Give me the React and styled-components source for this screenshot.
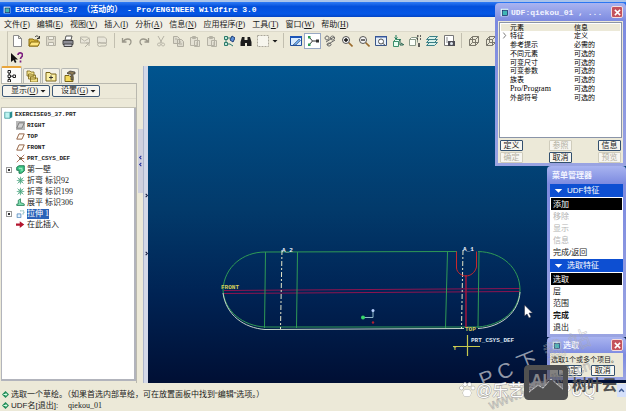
import { useState } from "react";
import styled, { createGlobalStyle, css } from "styled-components";

const GlobalStyle = createGlobalStyle`
  * {
    box-sizing: border-box;
  }
  body {
    margin: 0;
    overflow: hidden;
    background: #ece9d8;
    color: #1a1a1a;
    font: 8px/11px "Liberation Sans", "Noto Sans CJK SC", sans-serif;
  }
  button,
  input {
    margin: 0;
    padding: 0;
    border: 0;
    background: none;
    color: inherit;
    font: inherit;
    white-space: nowrap;
  }
  svg {
    display: block;
    flex: none;
  }
`;

/* ---------- icons ---------- */

const glyphs = {
  app: (
    <>
      <rect x="1" y="1" width="10" height="10" fill="#e8ffff" />
      <rect x="3" y="3" width="7" height="7" fill="#3fb5b5" stroke="#126" />
    </>
  ),
  new: (
    <path d="M2.500.5h5l3 3v8h-8zM7.500.5v3h3" fill="#fff" stroke="#8b8b8b" />
  ),
  open: (
    <>
      <path d="M1 4h4l1 1h4v6H1z" fill="#d9b63a" stroke="#8a6d10" />
      <path d="M3 7h9l-2 4H1z" fill="#ffe680" stroke="#8a6d10" />
      <path d="M7 2c2-2 3-1 4 1M11.500 1v2.500H9" fill="none" stroke="#333" />
    </>
  ),
  save: (
    <>
      <path d="M1.500 1.500h9v9h-9z" fill="#dedacb" stroke="#b5b2a5" />
      <path d="M3.500 1.500h5v3h-5zM3.500 7.500h5v3h-5z" fill="#f2f0e6" stroke="#b5b2a5" />
    </>
  ),
  print: (
    <>
      <path d="M4 1h6L9 5H3z" fill="#fff" stroke="#555" />
      <path d="M1 5.500h10v4H1z" fill="#8c8c94" stroke="#444" />
      <path d="M2 9h8v2.500H2z" fill="#c8c8d0" stroke="#444" />
    </>
  ),
  mail: (
    <>
      <path d="M1.500 2h7l2 2v4h-9zM1.500 3l4 3 5-3" fill="#e8e5d9" stroke="#bab7aa" />
      <path d="M7 8h3v3M10 8l-4 4" fill="none" stroke="#b5b2a5" />
    </>
  ),
  link: (
    <>
      <path d="M1.500 2h7l2 2v4h-9z" fill="#e8e5d9" stroke="#bab7aa" />
      <path d="M5 8a2 2 0 1 0 0 3h4a1.500 1.500 0 1 0 0-3z" fill="none" stroke="#b5b2a5" />
    </>
  ),
  undo: (
    <path d="M1.500 3v4h4M2 7c2-4 8-4 8 0 0 2-1 2.500-2 3" fill="none" stroke="#9a978a" strokeWidth="1.300" />
  ),
  redo: (
    <path d="M10.500 3v4h-4M10 7c-2-4-8-4-8 0 0 2 1 2.500 2 3" fill="none" stroke="#9a978a" strokeWidth="1.300" />
  ),
  cut: (
    <path
      d="M3 1l4 7M9 1L5 8M4 8a1.500 1.500 0 1 0 .1 0M8 8a1.500 1.500 0 1 0 .1 0"
      fill="none"
      stroke="#b5b2a5"
    />
  ),
  copy: (
    <path
      d="M1.500 1.500h4l2 2v5h-6zM5.500 4.500h4l2 2v5h-6zM7 7h2M7 9h3M3 4h2"
      fill="#dedbce"
      stroke="#b0ada0"
    />
  ),
  paste: (
    <path
      d="M1.500 2.500h7v8h-7zM3.500 1.500h3v2h-3zM5.500 5.500h5v6h-5zM7 8h2M7 10h2"
      fill="#e4e1d4"
      stroke="#b5b2a5"
    />
  ),
  regen: (
    <>
      <path d="M1.500 1.500h3v3h-3zM1.500 7.500h3v3h-3zM5 3h3M3 5v2M5 9h2" fill="#bfe6d8" stroke="#2c7a6a" />
      <path d="M7 5l2-4 3 2-2 4z" fill="#5e91d8" stroke="#1d3d78" />
      <path d="M7 9l3 2" stroke="#2c7a6a" />
    </>
  ),
  find: (
    <path d="M2 2h2.500v3h3V2H10l1.500 5v4H7V8H5v3H.5V7z" fill="#1d1d1d" />
  ),
  select: (
    <path d="M.5 .5h11v11H.5z" fill="#f7f6ee" stroke="#aaa79a" strokeDasharray="2 1" />
  ),
  repaint: (
    <>
      <path d="M.5 1.500h11v9H.5z" fill="#d9ecff" stroke="#1d4fa0" />
      <path d="M0 1h12v2H0z" fill="#1c55b8" />
      <path d="M3 10l6-6 1.500 1.500L6 10z" fill="#6ea7e8" stroke="#38527a" strokeWidth=".6" />
    </>
  ),
  spin: (
    <>
      <path d="M2 2l3.500 4H10M5.500 6L2 10" fill="none" stroke="#333" />
      <path d="M1 1h2.500v2.500H1z" fill="#2e9e55" />
      <path d="M9 4.500h3v3H9z" fill="#333" />
      <path d="M1 8.500h2.500V11H1z" fill="#2e9e55" />
    </>
  ),
  orient: (
    <path
      d="M3 1a2 2 0 1 0 .1 0M8.500 1a2 2 0 1 0 .1 0M2 7l8-5M3 10l8-5M5 8a2 1.500 0 1 0 .1 0"
      fill="none"
      stroke="#666"
    />
  ),
  zoomIn: (
    <>
      <path d="M7.500 7.500l4 4" stroke="#9a6b2c" strokeWidth="1.600" />
      <circle cx="5" cy="5" r="3.500" fill="#f5f5f5" stroke="#555" />
      <path d="M3 5h4M5 3v4" stroke="#111" strokeWidth="1.400" />
    </>
  ),
  zoomOut: (
    <>
      <path d="M7.500 7.500l4 4" stroke="#9a6b2c" strokeWidth="1.600" />
      <circle cx="5" cy="5" r="3.500" fill="#f5f5f5" stroke="#555" />
      <path d="M3 5h4" stroke="#111" strokeWidth="1.200" />
    </>
  ),
  refit: (
    <>
      <path d="M.5 1.500h11v9H.5z" fill="#e6f0fb" stroke="#3a5688" />
      <path d="M0 1h12v1.500H0z" fill="#35569a" />
      <circle cx="6" cy="6.500" r="2.500" fill="#fff" stroke="#555" />
      <path d="M8 8.500l2.500 2" stroke="#555" />
    </>
  ),
  reorient: (
    <>
      <path d="M1.500 6.500h5v5h-5zM1.500 6.500l2-2h5l-2 2" fill="#e6fff2" stroke="#3d8f6c" />
      <path d="M8 4v6h3M9 8l3 2" fill="none" stroke="#1a5c48" />
      <path d="M4 0v4M2.500 2.500L4 4l1.500-1.500" fill="none" stroke="#1a7a5a" />
    </>
  ),
  views: (
    <>
      <path d="M.5 4.500h6v6h-6zM.5 4.500l2-2h6l-2 2M8.500 2.500v5" fill="#fbfff8" stroke="#8a9a8a" />
      <path d="M8 1h1.500M11 1h1M8 4h1M11 4h1M9 9h2M9 11h2" stroke="#333" strokeWidth="1.400" />
    </>
  ),
  layers: (
    <path
      d="M3.500 1.500h8l-3 3h-8zM3.500 4.500h8l-3 3h-8zM3.500 7.500h8l-3 3h-8z"
      fill="#d8f1ea"
      stroke="#3b7f86"
    />
  ),
  viewMgr: (
    <>
      <path d="M1.500.5h9v10h-9z" fill="#fff" stroke="#777" />
      <path d="M3 3h2M3 5h2M3 7h2" stroke="#888" />
      <path d="M5 6h7v5H5z" fill="#4c4c54" />
      <circle cx="8.500" cy="8.500" r="1.500" fill="#dfe6ee" />
    </>
  ),
  wire: (
    <path
      d="M1.500 4.500h6v6h-6zM4.500 1.500h6v6h-6zM1.500 4.500l3-3M7.500 4.500l3-3M7.500 10.500l3-3M1.500 10.500l3-3"
      fill="none"
      stroke="#7a776c"
    />
  ),
  help: (
    <>
      <path d="M0 1v9l2.500-2L4 11l1.500-1L4 7.500h3z" fill="#111" />
      <path d="M7 3c0-3 4.500-2.500 4.500 0C11.500 5 9.500 5 9.500 7M9.500 8.500v2" fill="none" stroke="#7d2080" strokeWidth="1.700" />
    </>
  ),
  tabTree: (
    <path
      d="M2 .5h2.500V3H2zM2 5h2.500v2.500H2zM2 9.500h2.500V12H2zM7 5h2.500v2.500H7zM3.200 3v2M3.200 7.500v2M4.500 6.200H7"
      fill="#fff"
      stroke="#222"
    />
  ),
  tabFolders: (
    <path
      d="M1 1h3l1 1h3v4H1zM2.500 4h3l1 1h3v4h-7zM4.500 7h3l1 1h3v4h-7z"
      fill="#f4e38c"
      stroke="#7a6518"
      strokeWidth=".8"
    />
  ),
  tabFav: (
    <>
      <path d="M1 2.500h4l1 1.500h5v7H1z" fill="#fbf0a8" stroke="#7a6518" />
      <path d="M4 7.500h4M6 5.500v4" stroke="#333" />
    </>
  ),
  tabLink: (
    <>
      <path d="M1 5.500h4l1 1h3v5H1z" fill="#f4d95c" stroke="#7a6518" />
      <path d="M3 3l3-2 5 1v2H9v6H7V4H4z" fill="#8c7a55" stroke="#333" strokeWidth=".7" />
    </>
  ),
  part: (
    <>
      <path d="M1 3h7v8H1z" fill="#bdf3f0" stroke="#2f8f92" />
      <path d="M8 3l3-1.500v8L8 11z" fill="#2a8c90" />
      <path d="M1 3l3-1.500h7L8 3z" fill="#e6ffff" />
    </>
  ),
  plane: (
    <path d="M4 2.500h7l-3 7H1z" fill="#fffaf2" stroke="#8c5a3c" strokeWidth="1.200" />
  ),
  planeSel: (
    <>
      <path d="M0 0h12v12H0z" fill="#b9b9b9" />
      <path d="M4 2.500h7l-3 7H1z" fill="#cfcfcf" stroke="#777" strokeWidth="1.200" />
    </>
  ),
  csys: (
    <>
      <path d="M1 1l10 10M11 1L1 11M6 6h5" stroke="#b0705a" strokeWidth="1.300" />
      <path d="M4.500 4.500h3v3h-3z" fill="#553" />
    </>
  ),
  wall: (
    <>
      <path d="M1 3l3-2h7v7l-4 3H4V7H1z" fill="#44c98a" stroke="#0f6d43" strokeWidth="1.200" />
      <path d="M4 4.500h4V8" fill="none" stroke="#c9f5de" />
    </>
  ),
  bend: (
    <path
      d="M2 2l8 8M10 2l-8 8M1 6h10M6 1v10M3 4h6M3 8h6"
      fill="none"
      stroke="#3f9f78"
      strokeWidth=".9"
    />
  ),
  unbend: (
    <path d="M3 8V3l3-2v5l5 2v2H1V8z" fill="#7fdcae" stroke="#1c7a50" />
  ),
  extrude: (
    <>
      <path d="M1.500 6.500h5v5h-5z" fill="#e2f2ff" stroke="#4a82b8" />
      <path d="M5.500 2.500h5v4h-3" fill="none" stroke="#4a9a9a" strokeDasharray="2 1" />
    </>
  ),
  insert: (
    <path d="M0 4.500h5V1.500L11 6l-6 4.500v-3H0z" fill="#b3152e" />
  ),
  prompt: (
    <>
      <path d="M6 0l6 6-6 6-6-6z" fill="#1f8a57" />
      <path d="M2.500 5H6V3l3.500 3L6 9V7H2.500z" fill="#d5ffe6" />
    </>
  ),
  cross: (
    <path d="M2.500 2.500l7 7M9.500 2.500l-7 7" stroke="#fff" strokeWidth="2" />
  ),
  down: <path d="M1 4h10L6 9z" fill="currentColor" />,
  left: <path d="M8 2L4 6l4 4" fill="none" stroke="#1c2a9c" strokeWidth="2.500" />,
  right: <path d="M4 2l4 4-4 4" fill="none" stroke="#10183c" strokeWidth="2.500" />,
  next: <path d="M4 1l4 5-4 5" fill="none" stroke="#444" strokeWidth="1.200" />,
  up: <path d="M2 8l4-4 4 4" fill="none" stroke="#3d5a94" strokeWidth="2.500" />,
};

function Icon({ name, size = 12 }) {
  return (
    <svg width={size} height={size} viewBox="0 0 12 12" aria-hidden="true">
      {glyphs[name]}
    </svg>
  );
}

/* ---------- main window ---------- */

const Window = styled.div`
  display: flex;
  flex-direction: column;
  height: 100vh;
  border-top: 2px solid #a9c3ea;
`;

const TitleBar = styled.header`
  display: flex;
  align-items: center;
  gap: 4px;
  height: 15px;
  padding: 0 3px;
  background: linear-gradient(#2f7bf5, #0450dc 30%, #0557e6 80%, #0444c4);
  color: #fff;
  font-family: "Liberation Mono", "Noto Sans CJK SC", monospace;
  font-weight: bold;
  white-space: pre;
`;

const MenuBar = styled.nav`
  display: flex;
  align-items: center;
  gap: 7px;
  height: 14px;
  padding: 0 4px;
  background: #f1efe6;
  font-family: "Liberation Serif", "Noto Sans CJK SC", serif;
`;

const ToolArea = styled.div`
  display: flex;
  flex-direction: column;
  height: 35px;
  margin-left: 7px;
  border-left: 1px solid #c9c6b6;
  border-top: 1px solid #dcd9ca;
`;

const ToolRow = styled.div`
  display: flex;
  align-items: center;
  height: 17px;
`;

const ToolButton = styled.button`
  display: flex;
  align-items: center;
  justify-content: center;
  width: 17px;
  height: 16px;
  ${({ $pressed }) =>
    $pressed &&
    css`
      border: 1px solid #98a8c4;
      background: #fff;
    `}
`;

const Separator = styled.span`
  width: 8px;
  height: 15px;
  background: linear-gradient(#c2bfb0, #c2bfb0) center / 1px 100% no-repeat;
`;

const Caret = styled.span`
  display: flex;
  align-items: center;
  justify-content: center;
  width: 8px;
`;

const Main = styled.main`
  display: grid;
  grid-template-columns: 137px 6px 5px 1fr;
  flex: 1;
  min-height: 0;
`;

const Sidebar = styled.aside`
  display: flex;
  flex-direction: column;
  min-height: 0;
  padding-left: 1px;
`;

const Tabs = styled.div`
  display: flex;
  align-items: flex-end;
  gap: 1px;
  height: 17px;
`;

const Tab = styled.button`
  display: flex;
  align-items: center;
  justify-content: center;
  width: 18px;
  height: 15px;
  border: 1px solid #b6b8b4;
  border-bottom: 0;
  border-radius: 2px 2px 0 0;
  background: #f3f1e7;
  ${({ $active }) =>
    $active &&
    css`
      width: 21px;
      height: 17px;
      border-top: 2px solid #e9a63c;
      background: #fcfcf9;
    `}
`;

const Panel = styled.section`
  display: flex;
  flex-direction: column;
  flex: 1;
  min-height: 0;
  border: 1px solid #b9b8ae;
  border-width: 1px 1px 0 0;
`;

const PanelButtons = styled.div`
  display: flex;
  gap: 2px;
  padding: 1px;
`;

const PanelButton = styled.button`
  display: flex;
  align-items: center;
  justify-content: center;
  gap: 1px;
  width: 48px;
  height: 12px;
  padding-left: 6px;
  border: 1px solid #3f5a78;
  border-radius: 2px;
  background: #f6f5ef;
  font-family: "Liberation Serif", "Noto Sans CJK SC", serif;
  line-height: 10px;
`;

const PanelHead = styled.div`
  height: 10px;
  border-bottom: 1px solid #c4c2b4;
  border-top: 1px solid #dddaca;
`;

const TreeList = styled.ul`
  flex: 1;
  margin: 0 0 2px;
  padding: 1px 0 0 2px;
  border: 1px solid #b2b4bc;
  border-width: 0 2px 2px 1px;
  background: #fff;
  list-style: none;
`;

const TreeRow = styled.li`
  display: flex;
  align-items: center;
  gap: 2px;
  height: 11px;
  padding-left: ${({ $child }) => ($child ? 2 : 0)}px;
  white-space: pre;
`;

const Expander = styled.span`
  width: 6px;
  height: 6px;
  margin-right: 2px;
  ${({ $open }) =>
    $open &&
    css`
      border: 1px solid #9a9a9a;
      background: linear-gradient(#333, #333) center / 2px 2px no-repeat;
    `}
`;

const TreeText = styled.span`
  font-family: "Liberation Serif", "Noto Sans CJK SC", serif;
  ${({ $latin }) =>
    $latin &&
    css`
      font-family: "Liberation Mono", monospace;
      font-size: 6px;
      font-weight: bold;
    `}
  ${({ $selected }) =>
    $selected &&
    css`
      background: #2b62b8;
      color: #fff;
      line-height: 10px;
    `}
`;

const Gutter = styled.div`
  padding: 63px 0 0 1px;
  background: #ece9d8;
`;

const Sash = styled.div`
  display: flex;
  flex-direction: column;
  align-items: center;
  gap: 53px;
  padding-top: 127px;
  border-left: 1px solid #aeb6cc;
  background: #d3d8e8;
`;

const SashGrip = styled.button`
  display: flex;
  flex-direction: column;
  align-items: center;
  justify-content: center;
  gap: 2px;
  width: 5px;
  height: 64px;
  background: #cfd0de;
`;

const Canvas = styled.div`
  min-width: 0;
  min-height: 0;
  background: linear-gradient(#00548f, #023a6b 45%, #002354 72%, #000f34);
  svg {
    width: 100%;
    height: 100%;
  }
`;

const StatusBar = styled.footer`
  display: flex;
  flex-direction: column;
  justify-content: flex-end;
  height: 28px;
  padding-left: 2px;
`;

const StatusLine = styled.label`
  display: flex;
  align-items: center;
  gap: 2px;
  height: 11px;
`;

const StatusInput = styled.input`
  width: 80px;
  margin-left: 8px;
  font-family: "Liberation Serif", serif;
`;

const ScrollUp = styled.button`
  position: absolute;
  right: 0;
  bottom: 14px;
  display: flex;
  align-items: center;
  justify-content: center;
  width: 9px;
  height: 13px;
  background: #d5e0fa;
`;

/* ---------- floating windows ---------- */

const Floating = styled.div`
  position: absolute;
  top: 3px;
  right: 0;
  display: flex;
  flex-direction: column;
  align-items: flex-end;
`;

const Dialog = styled.section`
  width: ${({ $wide }) => ($wide ? 131 : 79)}px;
  padding: 0 3px 3px;
  border-radius: 4px 4px 0 0;
  background: linear-gradient(#a9b4f0, #7c8ae0 18px, #9aa4e2);
`;

const DialogTitle = styled.header`
  display: flex;
  align-items: center;
  gap: 2px;
  height: ${({ $tall }) => ($tall ? 18 : 16)}px;
  padding-left: 2px;
  color: #f2f4ff;
  font-family: ${({ $mono }) =>
    $mono
      ? '"Liberation Mono", "Noto Sans CJK SC", monospace'
      : '"Liberation Sans", "Noto Sans CJK SC", sans-serif'};
  font-weight: bold;
  white-space: pre;
`;

const CloseButton = styled.button`
  display: flex;
  align-items: center;
  justify-content: center;
  width: 12px;
  height: 12px;
  margin-left: auto;
  border: 1px solid #f5dede;
  border-radius: 2px;
  background: #c4525c;
`;

const DialogBody = styled.div`
  padding-top: 1px;
  background: #ece9d8;
`;

const ListBox = styled.div`
  height: 116px;
  margin: 0 1px;
  padding: 1px;
  border: 1px solid #8a94a8;
  background: #fff;
`;

const ElementTable = styled.table`
  width: 100%;
  height: 78px;
  border-collapse: collapse;
  table-layout: fixed;
  color: #000;
  font: 7px/7px "Liberation Sans", "Noto Sans CJK SC", sans-serif;
  th {
    background: #ece9d8;
    font-weight: normal;
    text-align: left;
  }
  th,
  td {
    padding: 0;
    white-space: nowrap;
  }
`;

const Latin = styled.span`
  font: 8px/7px "Liberation Serif", serif;
`;

const ButtonGrid = styled.div`
  display: grid;
  grid-template-columns: repeat(3, 23px);
  justify-content: space-between;
  gap: 1px;
  padding: 2px 2px 0;
`;

const PushButton = styled.button`
  height: 11px;
  border: 1px solid #33506e;
  border-radius: 1px;
  background: #f7f6f0;
  line-height: 9px;
  &:disabled {
    border-color: #cfccbc;
    color: #b3b0a2;
  }
`;

const MenuGroup = styled.h2`
  display: flex;
  align-items: center;
  gap: 4px;
  height: 13px;
  margin: 0;
  padding-left: 4px;
  background: #0d4fd2;
  color: #fff;
  font-size: 8px;
  font-weight: normal;
`;

const MenuItems = styled.div`
  display: flex;
  flex-direction: column;
  padding: 1px;
  background: #fff;
`;

const MenuItem = styled.button`
  height: 12px;
  padding-left: 2px;
  text-align: left;
  font-weight: ${({ $bold }) => ($bold ? "bold" : "normal")};
  ${({ $active }) =>
    $active &&
    css`
      background: #000;
      color: #fff;
    `}
  &:disabled {
    color: #b4b4b4;
  }
`;

const Message = styled.p`
  margin: 0;
  padding: 0 1px;
  font-size: 7px;
  white-space: nowrap;
`;

const ChoiceRow = styled.div`
  display: flex;
  justify-content: space-evenly;
  padding-bottom: 1px;
  button {
    width: 24px;
  }
`;

const Watermark = styled.svg`
  position: absolute;
  right: 0;
  bottom: 0;
  pointer-events: none;
`;

/* ---------- data ---------- */

const menus = [
  ["文件", "F"],
  ["编辑", "E"],
  ["视图", "V"],
  ["插入", "I"],
  ["分析", "A"],
  ["信息", "N"],
  ["应用程序", "P"],
  ["工具", "T"],
  ["窗口", "W"],
  ["帮助", "H"],
];

const tools = [
  "new", "open", "save", "print", "mail", "link", "|",
  "undo", "redo", "cut", "copy", "paste", "paste", "regen", "find", "select", "v", "|",
  "repaint", "spin", "orient", "zoomIn", "zoomOut", "refit", "reorient", "views", "layers", "viewMgr", "|",
  "wire", "wire",
];

const tree = [
  { icon: "planeSel", text: "RIGHT", latin: true },
  { icon: "plane", text: "TOP", latin: true },
  { icon: "plane", text: "FRONT", latin: true },
  { icon: "csys", text: "PRT_CSYS_DEF", latin: true },
  { icon: "wall", text: "第一壁", open: true },
  { icon: "bend", text: "折弯 标识92" },
  { icon: "bend", text: "折弯 标识199" },
  { icon: "unbend", text: "展平 标识306" },
  { icon: "extrude", text: "拉伸 1", open: true, selected: true },
  { icon: "insert", text: "在此插入" },
];

const elements = [
  ["特征", "定义"],
  ["参考提示", "必需的"],
  ["不同元素", "可选的"],
  ["可变尺寸", "可选的"],
  ["可变参数", "可选的"],
  ["族表", "可选的"],
  ["Pro/Program", "可选的"],
  ["外部符号", "可选的"],
];

/* ---------- parts ---------- */

function Toolbar() {
  return (
    <ToolArea>
      <ToolRow>
        {tools.map((name, i) => {
          if (name === "|") return <Separator key={i} />;
          if (name === "v")
            return (
              <Caret key={i}>
                <Icon name="down" size={6} />
              </Caret>
            );
          return (
            <ToolButton key={i} aria-label={name} $pressed={name === "spin"}>
              <Icon name={name} />
            </ToolButton>
          );
        })}
      </ToolRow>
      <ToolRow>
        <ToolButton aria-label="help">
          <Icon name="help" />
        </ToolButton>
      </ToolRow>
    </ToolArea>
  );
}

function ModelTree() {
  return (
    <Sidebar>
      <Tabs>
        <Tab $active aria-label="tree">
          <Icon name="tabTree" />
        </Tab>
        <Tab aria-label="folders">
          <Icon name="tabFolders" />
        </Tab>
        <Tab aria-label="favorites">
          <Icon name="tabFav" />
        </Tab>
        <Tab aria-label="connections">
          <Icon name="tabLink" />
        </Tab>
      </Tabs>
      <Panel>
        <PanelButtons>
          <PanelButton>
            <span>
              显示(<u>O</u>)
            </span>
            <Caret>
              <Icon name="down" size={6} />
            </Caret>
          </PanelButton>
          <PanelButton>
            <span>
              设置(<u>G</u>)
            </span>
            <Caret>
              <Icon name="down" size={6} />
            </Caret>
          </PanelButton>
        </PanelButtons>
        <PanelHead />
        <TreeList>
          <TreeRow>
            <Icon name="part" size={9} />
            <TreeText $latin>EXERCISE05_37.PRT</TreeText>
          </TreeRow>
          {tree.map((row) => (
            <TreeRow key={row.text} $child>
              <Expander $open={row.open} />
              <Icon name={row.icon} size={9} />
              <TreeText $latin={row.latin} $selected={row.selected}>
                {row.text}
              </TreeText>
            </TreeRow>
          ))}
        </TreeList>
      </Panel>
    </Sidebar>
  );
}

function Model() {
  return (
    <Canvas>
      <svg viewBox="148 66 478 317" fill="none">
        <path d="M224 290.500L520 288.500M224 293.500L520 291.500" stroke="#8c1450" />
        <g stroke="#2f9a56">
          <path d="M223 290C224 267 243 252 265 252L457 251.500M478 251.500C502 252 520 268 520 290" />
          <path d="M265.500 252L264.500 328M297.500 252L296.500 328M447.500 252L445.500 328M479 252L478 328" />
          <path d="M223 290C224 311 243 326 265 327L478 327C502 325 519 311 520 290" />
        </g>
        <path
          d="M223 293C226 315 244 328 265 329.500L464 328.500M478 328.500C503 327 519 311 520 292"
          stroke="#c3d3c8"
        />
        <path d="M282 250L280.500 329M463 250L461.500 329" stroke="#e6e6c8" strokeDasharray="5 2 2 2" />
        <path d="M466 275V328" stroke="#a3163c" strokeWidth="1.500" />
        <path d="M456.500 251.500V268C457 273 462 276 466 276S475 273 476.500 267V251.500" stroke="#c8282c" />
        <path d="M453 346.500H480M467.500 335V356" stroke="#c6c84e" strokeWidth="1.200" />
        <path d="M363 317.500H373V310" stroke="#8fb8c8" />
        <circle cx="363" cy="317.500" r="2" fill="#35d86a" />
        <circle cx="373" cy="310.500" r="1.500" fill="#b8d0ff" />
        <circle cx="373" cy="322.500" r="1.200" fill="#b02030" />
        <g fontFamily="Liberation Mono, monospace" fontSize="6" fontWeight="bold">
          <text x="221" y="289" fill="#d6cf5a">FRONT</text>
          <text x="465" y="331" fill="#d6cf5a">TOP</text>
          <text x="282" y="252" fill="#eef3ff">A_2</text>
          <text x="463" y="251" fill="#eef3ff">A_1</text>
          <text x="471" y="342" fill="#dfe6f2">PRT_CSYS_DEF</text>
          <text x="453" y="350" fill="#d6cf5a">Y</text>
        </g>
        <path d="M524.500 305v11l2.500-2 2 4 2-1-2-4h3.500z" fill="#fff" stroke="#223" strokeWidth=".5" />
      </svg>
    </Canvas>
  );
}

function UdfDialog() {
  return (
    <Dialog $wide>
      <DialogTitle $tall $mono>
        <Icon name="app" size={9} />
        UDF:qiekou_01 , ...
        <CloseButton aria-label="close">
          <Icon name="cross" size={9} />
        </CloseButton>
      </DialogTitle>
      <DialogBody>
        <ListBox>
          <ElementTable>
            <colgroup>
              <col width="9" />
              <col width="64" />
              <col />
            </colgroup>
            <thead>
              <tr>
                <th />
                <th>元素</th>
                <th>信息</th>
              </tr>
            </thead>
            <tbody>
              {elements.map(([name, info], i) => (
                <tr key={name}>
                  <td>{i === 0 && <Icon name="next" size={7} />}</td>
                  <td>{name.startsWith("Pro") ? <Latin>{name}</Latin> : name}</td>
                  <td>{info}</td>
                </tr>
              ))}
            </tbody>
          </ElementTable>
        </ListBox>
        <ButtonGrid>
          <PushButton>定义</PushButton>
          <PushButton disabled>参照</PushButton>
          <PushButton>信息</PushButton>
          <PushButton disabled>确定</PushButton>
          <PushButton>取消</PushButton>
          <PushButton disabled>预览</PushButton>
        </ButtonGrid>
      </DialogBody>
    </Dialog>
  );
}

function MenuManager() {
  return (
    <Dialog>
      <DialogTitle $tall>菜单管理器</DialogTitle>
      <MenuGroup>
        <Icon name="down" size={9} />
        UDF特征
      </MenuGroup>
      <MenuItems>
        <MenuItem $active>添加</MenuItem>
        <MenuItem disabled>移除</MenuItem>
        <MenuItem disabled>显示</MenuItem>
        <MenuItem disabled>信息</MenuItem>
        <MenuItem>完成/返回</MenuItem>
      </MenuItems>
      <MenuGroup>
        <Icon name="down" size={9} />
        选取特征
      </MenuGroup>
      <MenuItems>
        <MenuItem $active>选取</MenuItem>
        <MenuItem>层</MenuItem>
        <MenuItem>范围</MenuItem>
        <MenuItem $bold>完成</MenuItem>
        <MenuItem>退出</MenuItem>
      </MenuItems>
    </Dialog>
  );
}

function SelectDialog() {
  return (
    <Dialog>
      <DialogTitle>
        <Icon name="app" size={9} />
        选取
        <CloseButton aria-label="close">
          <Icon name="cross" size={9} />
        </CloseButton>
      </DialogTitle>
      <DialogBody>
        <Message>选取1个或多个项目。</Message>
        <ChoiceRow>
          <PushButton>确定</PushButton>
          <PushButton>取消</PushButton>
        </ChoiceRow>
      </DialogBody>
    </Dialog>
  );
}

function Overlay() {
  return (
    <Watermark
      width="186"
      height="111"
      viewBox="440 300 186 111"
      fontFamily="Liberation Sans, Noto Sans CJK SC, sans-serif"
    >
      <g fontSize="21" transform="rotate(-22 484 388)">
        <text x="483" y="387" fill="#b9bdc6" fillOpacity=".8">P C 下</text>
        <text x="553" y="387" fill="none" stroke="#aaa" strokeOpacity=".6" strokeWidth=".6">载 站</text>
      </g>
      <text
        x="491"
        y="410"
        fontSize="14"
        fill="#d8d8d4"
        stroke="#a2a2a2"
        strokeWidth=".4"
        fillOpacity=".5"
        transform="rotate(-22 491 410)"
      >
        www.PConline.cn
      </text>
      <g fill="#fff" stroke="#a0a0a0" strokeWidth="1" paintOrder="stroke">
        <ellipse cx="467" cy="393" rx="4" ry="3.500" />
        <circle cx="461.500" cy="388" r="1.800" />
        <circle cx="465" cy="384.500" r="1.800" />
        <circle cx="469.500" cy="384.500" r="1.800" />
        <circle cx="473" cy="388" r="1.800" />
        <text x="476" y="396" fontSize="16">@乐艺教程 PUQ</text>
      </g>
      <rect x="526.500" y="367.500" width="39" height="30" rx="2" fill="#3c3c44" fillOpacity=".6" stroke="#505050" strokeWidth="5" />
      <text x="531" y="386" fontSize="16" fontWeight="bold" fill="#85858a">AI</text>
      <path d="M529 393l9-7 5 3 8-9 12 10v6h-34z" fill="#505050" />
      <path d="M529 392l9-7 5 3 8-9 12 10" fill="none" stroke="#c4c4c4" strokeDasharray="3 1" />
      <text x="572" y="390" fontSize="15" fontWeight="bold" fill="#505050">树叶云</text>
    </Watermark>
  );
}

function App() {
  const [udfName, setUdfName] = useState("qiekou_01");

  return (
    <>
      <GlobalStyle />
      <Window>
        <TitleBar>
          <Icon name="app" size={8} />
          {"EXERCISE05_37 （活动的） - Pro/ENGINEER Wildfire 3.0"}
        </TitleBar>
        <MenuBar>
          {menus.map(([label, key]) => (
            <button key={label}>
              {label}(<u>{key}</u>)
            </button>
          ))}
        </MenuBar>
        <Toolbar />
        <Main>
          <ModelTree />
          <Gutter>
            <SashGrip aria-label="collapse">
              <Icon name="left" size={5} />
              <Icon name="left" size={5} />
            </SashGrip>
          </Gutter>
          <Sash>
            <Icon name="right" size={5} />
            <Icon name="right" size={5} />
          </Sash>
          <Model />
        </Main>
        <StatusBar>
          <StatusLine as="div">
            <Icon name="prompt" size={7} />
            选取一个草绘。（如果首选内部草绘，可在放置面板中找到“编辑”选项。）
          </StatusLine>
          <StatusLine>
            <Icon name="prompt" size={7} />
            UDF名[退出]:
            <StatusInput
              value={udfName}
              onChange={(e) => setUdfName(e.target.value)}
            />
          </StatusLine>
        </StatusBar>
      </Window>
      <ScrollUp aria-label="scroll up">
        <Icon name="up" size={7} />
      </ScrollUp>
      <Floating>
        <UdfDialog />
        <MenuManager />
        <SelectDialog />
      </Floating>
      <Overlay />
    </>
  );
}

export default App;
